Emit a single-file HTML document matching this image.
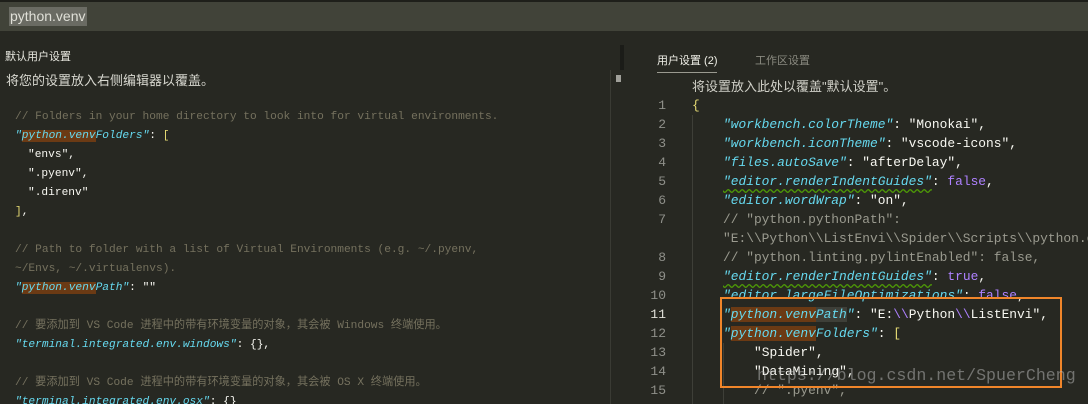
<!DOCTYPE html>
<html><head><meta charset="utf-8"><style>
html,body{margin:0;width:1088px;height:404px;overflow:hidden;}
body{background:#272822;position:relative;font-family:"Liberation Sans","Noto Sans CJK SC",sans-serif;}
.t{position:absolute;white-space:pre;}
.l{font-family:"Liberation Mono","Noto Sans CJK SC",monospace;font-size:11.2px;line-height:19px;height:19px;}
.r{font-family:"Liberation Mono","Noto Sans CJK SC",monospace;font-size:12.9px;line-height:19px;height:19px;}
.c{color:#75715e}.k{color:#66d9ef;font-style:italic}.s{color:#e6db74}.w{color:#f8f8f2}.p{color:#ae81ff}.g{color:#9a9a8f}
.hl{background:#6b3a14}
.sq{text-decoration:underline wavy #4e9a06;text-underline-offset:3px}
.n{position:absolute;left:630px;width:36px;text-align:right;font-family:"Liberation Mono",monospace;font-size:13px;line-height:19px;color:#8f908a}
</style></head><body>
<div style="position:absolute;left:0;top:0;width:1088px;height:2px;background:#1e1f1a"></div>
<div style="position:absolute;left:0;top:2px;width:1088px;height:29px;background:#414339"></div>
<div class="t" style="left:9px;top:7px;height:19px;background:#6a6b63;color:#e0e0d8;font-size:14px;line-height:19px;padding:0 1px">python.venv</div>
<div class="t" style="left:5px;top:48px;color:#e8e8e0;font-size:11px">默认用户设置</div>
<div class="t" style="left:6px;top:70px;color:#d8d8d0;font-size:13px">将您的设置放入右侧编辑器以覆盖。</div>
<div class="t l" style="left:15px;top:108px"><span class="c">// Folders in your home directory to look into for virtual environments.</span></div>
<div class="t l" style="left:15px;top:127px"><span class="k">"<span class="hl">python.venv</span>Folders"</span><span class="w">: </span><span class="s">[</span></div>
<div class="t l" style="left:28px;top:146px"><span class="w">"envs",</span></div>
<div class="t l" style="left:28px;top:165px"><span class="w">".pyenv",</span></div>
<div class="t l" style="left:28px;top:184px"><span class="w">".direnv"</span></div>
<div class="t l" style="left:15px;top:203px"><span class="s">]</span><span class="w">,</span></div>
<div class="t l" style="left:15px;top:241px"><span class="c">// Path to folder with a list of Virtual Environments (e.g. ~/.pyenv,</span></div>
<div class="t l" style="left:15px;top:260px"><span class="c">~/Envs, ~/.virtualenvs).</span></div>
<div class="t l" style="left:15px;top:279px"><span class="k">"<span class="hl">python.venv</span>Path"</span><span class="w">: ""</span></div>
<div class="t l" style="left:15px;top:317px"><span class="c">// 要添加到 VS Code 进程中的带有环境变量的对象，其会被 Windows 终端使用。</span></div>
<div class="t l" style="left:15px;top:336px"><span class="k">"terminal.integrated.env.windows"</span><span class="w">: {},</span></div>
<div class="t l" style="left:15px;top:374px"><span class="c">// 要添加到 VS Code 进程中的带有环境变量的对象，其会被 OS X 终端使用。</span></div>
<div class="t l" style="left:15px;top:393px"><span class="k">"terminal.integrated.env.osx"</span><span class="w">: {}</span></div>

<div style="position:absolute;left:620px;top:45px;width:4px;height:25px;background:#1b1c18"></div>
<div style="position:absolute;left:610px;top:70px;width:1px;height:334px;background:#3a3b34"></div>
<div style="position:absolute;left:616px;top:75px;width:5px;height:7px;background:#a0a09a"></div>
<div class="t" style="left:657px;top:52px;color:#f0f0e8;font-size:11px">用户设置 (2)</div>
<div class="t" style="left:755px;top:52px;color:#8a8a80;font-size:11px">工作区设置</div>
<div style="position:absolute;left:657px;top:72px;width:60px;height:1px;background:#9a9a90"></div>
<div class="t" style="left:692px;top:76px;color:#d0d0c8;font-size:13px">将设置放入此处以覆盖"默认设置"。</div>
<div style="position:absolute;left:692px;top:115px;width:1px;height:289px;background:#3e3f38"></div>
<div style="position:absolute;left:723px;top:343px;width:1px;height:61px;background:#3e3f38"></div>
<div class="n" style="top:96px">1</div><div class="n" style="top:115px">2</div><div class="n" style="top:134px">3</div><div class="n" style="top:153px">4</div><div class="n" style="top:172px">5</div><div class="n" style="top:191px">6</div><div class="n" style="top:210px">7</div><div class="n" style="top:248px">8</div><div class="n" style="top:267px">9</div><div class="n" style="top:286px">10</div><div class="n" style="top:305px;color:#e0e0d8">11</div><div class="n" style="top:324px">12</div><div class="n" style="top:343px">13</div><div class="n" style="top:362px">14</div><div class="n" style="top:381px">15</div>
<div class="t r" style="left:692px;top:96px"><span class="s">{</span></div>
<div class="t r" style="left:723px;top:115px"><span class="k">"workbench.colorTheme"</span><span class="w">: "Monokai",</span></div>
<div class="t r" style="left:723px;top:134px"><span class="k">"workbench.iconTheme"</span><span class="w">: "vscode-icons",</span></div>
<div class="t r" style="left:723px;top:153px"><span class="k">"files.autoSave"</span><span class="w">: "afterDelay",</span></div>
<div class="t r" style="left:723px;top:172px"><span class="k sq">"editor.renderIndentGuides"</span><span class="w">: </span><span class="p">false</span><span class="w">,</span></div>
<div class="t r" style="left:723px;top:191px"><span class="k">"editor.wordWrap"</span><span class="w">: "on",</span></div>
<div class="t r" style="left:723px;top:210px"><span class="g">// "python.pythonPath":</span></div>
<div class="t r" style="left:723px;top:229px"><span class="g">"E:\\Python\\ListEnvi\\Spider\\Scripts\\python.exe"</span></div>
<div class="t r" style="left:723px;top:248px"><span class="g">// "python.linting.pylintEnabled": false,</span></div>
<div class="t r" style="left:723px;top:267px"><span class="k sq">"editor.renderIndentGuides"</span><span class="w">: </span><span class="p">true</span><span class="w">,</span></div>
<div class="t r" style="left:723px;top:286px"><span class="k">"editor.largeFileOptimizations"</span><span class="w">: </span><span class="p">false</span><span class="w">,</span></div>
<div class="t r" style="left:723px;top:305px"><span class="k">"<span class="hl">python.venv</span><span style="background:#3e3f38">Path</span>"</span><span class="w">: "E:</span><span class="p">\\</span><span class="w">Python</span><span class="p">\\</span><span class="w">ListEnvi",</span></div>
<div class="t r" style="left:723px;top:324px"><span class="k">"<span class="hl">python.venv</span>Folders"</span><span class="w">: </span><span class="s">[</span></div>
<div class="t r" style="left:754px;top:343px"><span class="w">"Spider",</span></div>
<div class="t r" style="left:754px;top:362px"><span class="w">"DataMining",</span></div>
<div class="t r" style="left:754px;top:381px"><span class="g">// ".pyenv",</span></div>
<div style="position:absolute;left:720px;top:297px;width:338px;height:87px;border:2px solid #f0852a"></div>
<div class="t" style="left:757px;top:366px;color:rgba(190,190,190,0.5);font-family:'Liberation Mono',monospace;font-size:16.6px;line-height:20px">https://blog.csdn.net/SpuerCheng</div>
</body></html>
